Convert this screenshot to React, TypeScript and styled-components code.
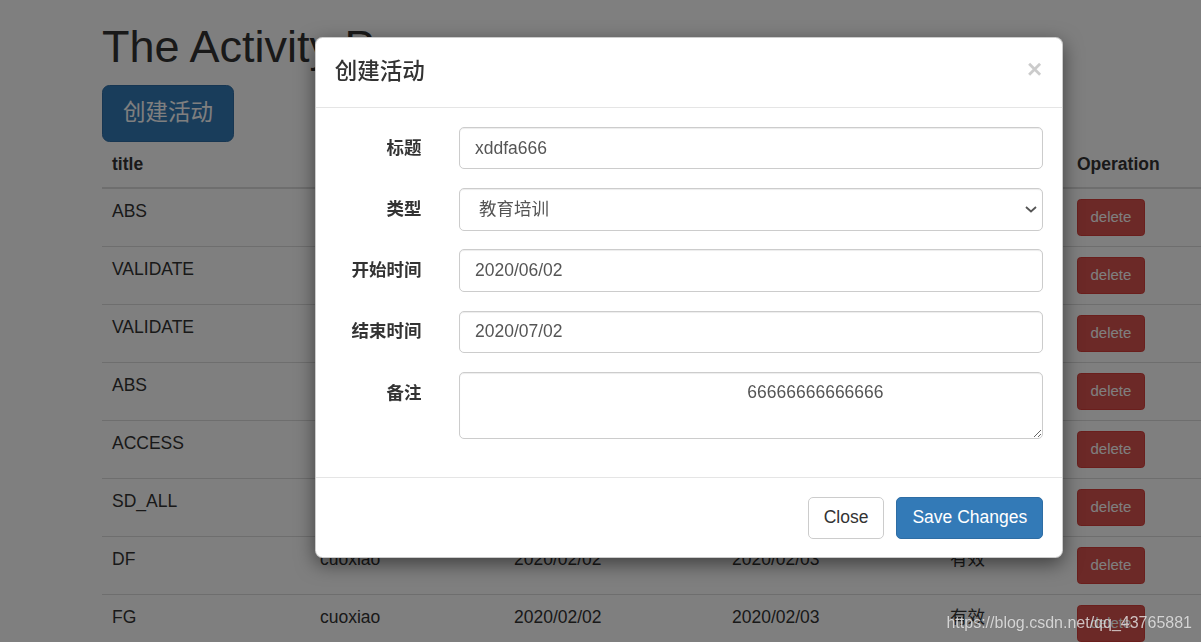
import React from "react";
import styled, { createGlobalStyle } from "styled-components";

const GlobalStyle = createGlobalStyle`
  html, body {
    margin: 0;
    padding: 0;
    background: #fff;
    overflow: hidden;
  }
  body {
    font-family: "Liberation Sans", Arial, "Noto Sans CJK SC", sans-serif;
    font-size: 17.5px;
    line-height: 1.42857;
    color: #333;
  }
  * { box-sizing: border-box; }
`;

const Page = styled.div`
  width: 1240px;
  padding-left: 102px;
`;

const Heading = styled.h1`
  margin: 22px 0 13px;
  font-size: 45px;
  font-weight: 500;
  line-height: 1.1;
  color: #333;
`;

const Toolbar = styled.div`
  display: flex;
`;

const Btn = styled.button<{ $variant: "primary" | "default" | "danger"; $size: "lg" | "md" | "sm" }>`
  display: inline-flex;
  align-items: center;
  justify-content: center;
  font-family: "Liberation Sans", Arial, "Noto Sans CJK SC", sans-serif;
  font-weight: 400;
  cursor: pointer;
  border: 1px solid;
  white-space: nowrap;
  ${(p) =>
    p.$size === "lg"
      ? `padding: 12.5px 20px; font-size: 22.5px; line-height: 30px; border-radius: 7.5px;`
      : p.$size === "md"
      ? `padding: 7.5px 15px; font-size: 17.5px; line-height: 25px; border-radius: 5px;`
      : `padding: 6.25px 12.5px; font-size: 15px; line-height: 22.5px; border-radius: 3.75px;`}
  ${(p) =>
    p.$variant === "primary"
      ? `background: #337ab7; border-color: #2e6da4; color: #fff;`
      : p.$variant === "danger"
      ? `background: #d9534f; border-color: #d43f3a; color: #fff;`
      : `background: #fff; border-color: #ccc; color: #333;`}
`;

const Table = styled.table`
  width: 1130px;
  border-collapse: collapse;
  border-spacing: 0;
`;

const Th = styled.th<{ $w: number }>`
  width: ${(p) => p.$w}px;
  text-align: left;
  font-weight: 700;
  padding: 10px;
  line-height: 25px;
  vertical-align: bottom;
  border-bottom: 2.5px solid #ddd;
`;

const Td = styled.td`
  padding: 10px;
  line-height: 25px;
  vertical-align: top;
  border-top: 1px solid #ddd;
`;

const Backdrop = styled.div`
  position: fixed;
  inset: 0;
  background: rgba(0, 0, 0, 0.5);
`;

const ModalLayer = styled.div`
  position: fixed;
  inset: 0;
  padding: 36.5px 0 0 315px;
`;

const Dialog = styled.div`
  width: 748px;
  background: #fff;
  border: 1px solid rgba(0, 0, 0, 0.2);
  border-radius: 7.5px;
  box-shadow: 0 6px 19px rgba(0, 0, 0, 0.5);
`;

const ModalHeader = styled.div`
  display: flex;
  justify-content: space-between;
  align-items: flex-start;
  padding: 18.75px;
  border-bottom: 1px solid #e5e5e5;
`;

const ModalTitle = styled.h4`
  margin: 0;
  font-size: 22.5px;
  font-weight: 500;
  line-height: 32px;
  color: #333;
`;

const CloseX = styled.span`
  font-size: 26px;
  font-weight: 700;
  line-height: 1;
  color: #000;
  opacity: 0.2;
  margin-top: 0px;
  margin-right: 1px;
`;

const ModalBody = styled.div`
  padding: 18.75px;
`;

const FormGroup = styled.div`
  display: grid;
  grid-template-columns: 86.75px 1fr;
  column-gap: 37.5px;
  margin-bottom: 18.75px;
`;

const Label = styled.label`
  text-align: right;
  font-weight: 700;
  padding-top: 8.75px;
  line-height: 25px;
  white-space: nowrap;
`;

const controlBase = `
  display: block;
  width: 100%;
  padding: 7.5px 15px;
  font-family: "Liberation Sans", Arial, "Noto Sans CJK SC", sans-serif;
  font-size: 17.5px;
  line-height: 25px;
  color: #555;
  background: #fff;
  border: 1px solid #ccc;
  border-radius: 5px;
  box-shadow: inset 0 1px 1px rgba(0, 0, 0, 0.075);
  outline: none;
`;

const Input = styled.input`
  ${controlBase}
  height: 42.5px;
`;

const SelectWrap = styled.div`
  position: relative;
`;

const Select = styled.select`
  ${controlBase}
  height: 42.5px;
  padding-left: 19px;
  appearance: none;
  -webkit-appearance: none;
`;

const Chevron = styled.svg`
  position: absolute;
  right: 6px;
  top: 18px;
  pointer-events: none;
`;

const TextArea = styled.textarea`
  ${controlBase}
  height: 67.5px;
  resize: vertical;
`;

const ModalFooter = styled.div`
  display: flex;
  justify-content: flex-end;
  gap: 12px;
  padding: 18.75px;
  border-top: 1px solid #e5e5e5;
`;

const Watermark = styled.div`
  position: fixed;
  right: 9px;
  bottom: 9px;
  font-family: "Liberation Sans", Arial, sans-serif;
  font-size: 16px;
  line-height: 20px;
  color: rgba(255, 255, 255, 0.72);
  text-shadow: 0 0 1px rgba(0, 0, 0, 0.25);
`;

const rows = [
  ["ABS", "cuoxiao", "2020/02/02", "2020/02/03", "有效"],
  ["VALIDATE", "cuoxiao", "2020/02/02", "2020/02/03", "有效"],
  ["VALIDATE", "cuoxiao", "2020/02/02", "2020/02/03", "有效"],
  ["ABS", "cuoxiao", "2020/02/02", "2020/02/03", "有效"],
  ["ACCESS", "cuoxiao", "2020/02/02", "2020/02/03", "有效"],
  ["SD_ALL", "cuoxiao", "2020/02/02", "2020/02/03", "有效"],
  ["DF", "cuoxiao", "2020/02/02", "2020/02/03", "有效"],
  ["FG", "cuoxiao", "2020/02/02", "2020/02/03", "有效"],
];

const cols: [string, number][] = [
  ["title", 208],
  ["creator", 194],
  ["startTime", 218],
  ["endTime", 218],
  ["status", 127],
  ["Operation", 165],
];

const remark = " ".repeat(56) + "66666666666666";

export default function App() {
  return (
    <>
      <GlobalStyle />
      <Page>
        <Heading>The Activity Page</Heading>
        <Toolbar>
          <Btn $variant="primary" $size="lg">创建活动</Btn>
        </Toolbar>
        <Table>
          <thead>
            <tr>
              {cols.map(([c, w]) => (
                <Th key={c} $w={w}>{c}</Th>
              ))}
            </tr>
          </thead>
          <tbody>
            {rows.map((r, i) => (
              <tr key={i}>
                {r.map((c, j) => (
                  <Td key={j}>{c}</Td>
                ))}
                <Td>
                  <Btn $variant="danger" $size="sm">delete</Btn>
                </Td>
              </tr>
            ))}
          </tbody>
        </Table>
      </Page>
      <Backdrop />
      <ModalLayer>
        <Dialog>
          <ModalHeader>
            <ModalTitle>创建活动</ModalTitle>
            <CloseX>×</CloseX>
          </ModalHeader>
          <ModalBody>
            <FormGroup>
              <Label>标题</Label>
              <Input defaultValue="xddfa666" />
            </FormGroup>
            <FormGroup>
              <Label>类型</Label>
              <SelectWrap>
                <Select defaultValue="edu">
                  <option value="edu">教育培训</option>
                </Select>
                <Chevron width="12" height="7" viewBox="0 0 12 7">
                  <path d="M1 1 L6 5.5 L11 1" fill="none" stroke="#555" strokeWidth="1.8" />
                </Chevron>
              </SelectWrap>
            </FormGroup>
            <FormGroup>
              <Label>开始时间</Label>
              <Input defaultValue="2020/06/02" />
            </FormGroup>
            <FormGroup>
              <Label>结束时间</Label>
              <Input defaultValue="2020/07/02" />
            </FormGroup>
            <FormGroup>
              <Label>备注</Label>
              <TextArea rows={2} defaultValue={remark} />
            </FormGroup>
          </ModalBody>
          <ModalFooter>
            <Btn $variant="default" $size="md">Close</Btn>
            <Btn $variant="primary" $size="md">Save Changes</Btn>
          </ModalFooter>
        </Dialog>
      </ModalLayer>
      <Watermark>https://blog.csdn.net/qq_43765881</Watermark>
    </>
  );
}
